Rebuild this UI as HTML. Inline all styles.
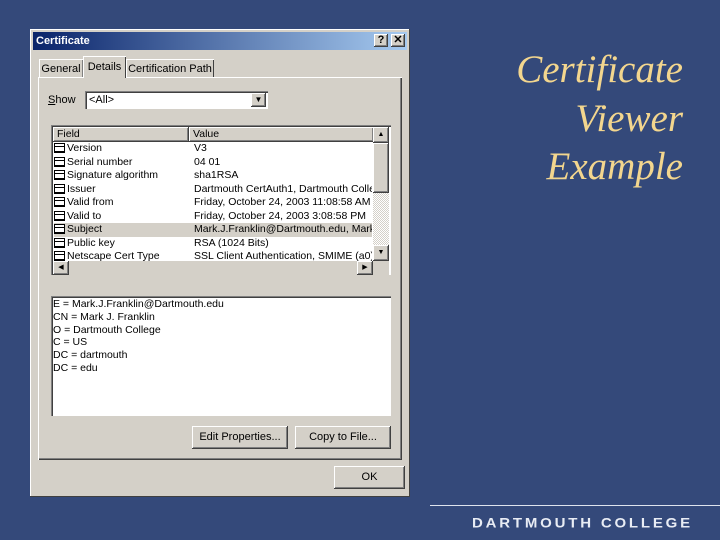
<!DOCTYPE html>
<html><head><style>
body{margin:0;width:720px;height:540px;background:#34497a;position:relative;overflow:hidden;font-family:"Liberation Sans",sans-serif}
.a{position:absolute}
.title{right:37px;top:46px;text-align:right;font-family:"Liberation Serif",serif;font-style:italic;font-size:39px;line-height:48.5px;color:#f3d68e}
.dlg{left:30px;top:29px;width:380px;height:468px;background:#d4d0c8;box-shadow:inset -1px -1px #404040,inset 1px 1px #fff}
.tb{left:3px;top:3px;width:374px;height:18px;background:linear-gradient(90deg,#0a246a,#a6caf0);color:#fff;font-weight:bold;font-size:11px;line-height:18px;padding-left:3px;box-sizing:border-box}
.btn{background:#d4d0c8;box-shadow:inset -1px -1px #404040,inset 1px 1px #fff,inset -2px -2px #808080;font-size:11px;text-align:center;color:#000}
.sm{width:14px;height:13px;line-height:13px;font-weight:bold;font-size:11px}
.t{font-size:11px;color:#000}
.sunk{background:#fff;box-shadow:inset 1px 1px #808080,inset 2px 2px #404040,inset -1px -1px #fff}
.row{position:absolute;left:3px;width:318px;height:13.5px;font-size:10.5px;line-height:13.5px;white-space:nowrap;overflow:hidden}
.row i{display:inline-block;width:11px;height:10px;border:1px solid #000;background:linear-gradient(#fff 0 2px,#000 2px 3px,#fff 3px 7px,#000 7px 8px,#fff 8px);vertical-align:-2px;margin-right:2px;box-sizing:border-box}
.row span{position:absolute;left:140px}
.lt{font-size:10.5px;line-height:12.8px}
</style></head><body>
<div class="a title">Certificate<br>Viewer<br>Example</div>
<div class="a" style="left:430px;top:505px;width:290px;height:1px;background:#dfe4ee"></div>
<div class="a" style="left:472px;top:516px;color:#e8ecf4;font-size:15px;font-weight:bold;letter-spacing:2.8px;transform:scaleY(0.9);transform-origin:top left">DARTMOUTH COLLEGE</div>
<div class="a dlg">
 <div class="a tb">Certificate</div>
 <div class="a btn sm" style="left:344px;top:5px">?</div>
 <div class="a btn sm" style="left:361px;top:5px">✕</div>
 <div class="a" style="left:8px;top:48px;width:364px;height:383px;box-shadow:inset 1px 1px #fff,inset -1px -1px #404040,inset -2px -2px #808080"></div>
 <div class="a t" style="left:9px;top:30px;width:44px;height:18px;line-height:20px;text-align:center;box-shadow:inset 1px 1px #fff,inset -1px 0 #808080">General</div>
 <div class="a t" style="left:53px;top:27px;width:43px;height:22px;line-height:22px;text-align:center;background:#d4d0c8;box-shadow:inset 1px 1px #fff,inset -1px 0 #404040">Details</div>
 <div class="a t" style="left:96px;top:30px;width:88px;height:18px;line-height:20px;text-align:center;box-shadow:inset 1px 1px #fff,inset -1px 0 #404040">Certification Path</div>
 <div class="a t" style="left:18px;top:65px"><u>S</u>how</div>
 <div class="a sunk" style="left:55px;top:62px;width:183px;height:18px"><div class="a t" style="left:4px;top:3px">&lt;All&gt;</div><div class="a btn" style="right:2px;top:2px;width:15px;height:14px;font-size:8px;line-height:14px">▼</div></div>
 <div class="a sunk" style="left:21px;top:96px;width:340px;height:150px;overflow:hidden">
  <div class="a btn" style="left:2px;top:2px;width:136px;height:15px;font-size:10.5px;line-height:15px;text-align:left;padding-left:4px;box-sizing:border-box">Field</div>
  <div class="a btn" style="left:138px;top:2px;width:185px;height:15px;font-size:10.5px;line-height:15px;text-align:left;padding-left:4px;box-sizing:border-box">Value</div>
  <div class="row" style="top:17px"><i></i>Version<span>V3</span></div>
  <div class="row" style="top:30.5px"><i></i>Serial number<span>04 01</span></div>
  <div class="row" style="top:44px"><i></i>Signature algorithm<span>sha1RSA</span></div>
  <div class="row" style="top:57.5px"><i></i>Issuer<span>Dartmouth CertAuth1, Dartmouth Colleg</span></div>
  <div class="row" style="top:71px"><i></i>Valid from<span>Friday, October 24, 2003 11:08:58 AM</span></div>
  <div class="row" style="top:84.5px"><i></i>Valid to<span>Friday, October 24, 2003 3:08:58 PM</span></div>
  <div class="row" style="top:98px;background:#d4d0c8"><i></i>Subject<span>Mark.J.Franklin@Dartmouth.edu, Mark</span></div>
  <div class="row" style="top:111.5px"><i></i>Public key<span>RSA (1024 Bits)</span></div>
  <div class="row" style="top:125px"><i></i>Netscape Cert Type<span>SSL Client Authentication, SMIME (a0)</span></div>
  <div class="a" style="left:322px;top:2px;width:16px;height:134px;background:repeating-conic-gradient(#fff 0 25%,#d4d0c8 0 50%) 0 0/2px 2px"></div>
  <div class="a btn" style="left:322px;top:2px;width:16px;height:16px;font-size:7px;line-height:16px">▲</div>
  <div class="a btn" style="left:322px;top:18px;width:16px;height:50px"></div>
  <div class="a btn" style="left:322px;top:120px;width:16px;height:16px;font-size:7px;line-height:16px">▼</div>
  <div class="a" style="left:2px;top:136px;width:336px;height:14px;background:#d4d0c8"></div>
  <div class="a btn" style="left:2px;top:136px;width:16px;height:14px;font-size:7px;line-height:14px">◀</div>
  <div class="a btn" style="left:306px;top:136px;width:16px;height:14px;font-size:7px;line-height:14px">▶</div>
 </div>
 <div class="a sunk" style="left:21px;top:267px;width:340px;height:120px">
  <div class="a lt" style="left:2px;top:2px">E = Mark.J.Franklin@Dartmouth.edu<br>CN = Mark J. Franklin<br>O = Dartmouth College<br>C = US<br>DC = dartmouth<br>DC = edu</div>
 </div>
 <div class="a btn" style="left:162px;top:397px;width:96px;height:23px;line-height:23px">Edit Properties...</div>
 <div class="a btn" style="left:265px;top:397px;width:96px;height:23px;line-height:23px">Copy to File...</div>
 <div class="a btn" style="left:304px;top:437px;width:71px;height:23px;line-height:23px">OK</div>
</div>
</body></html>
